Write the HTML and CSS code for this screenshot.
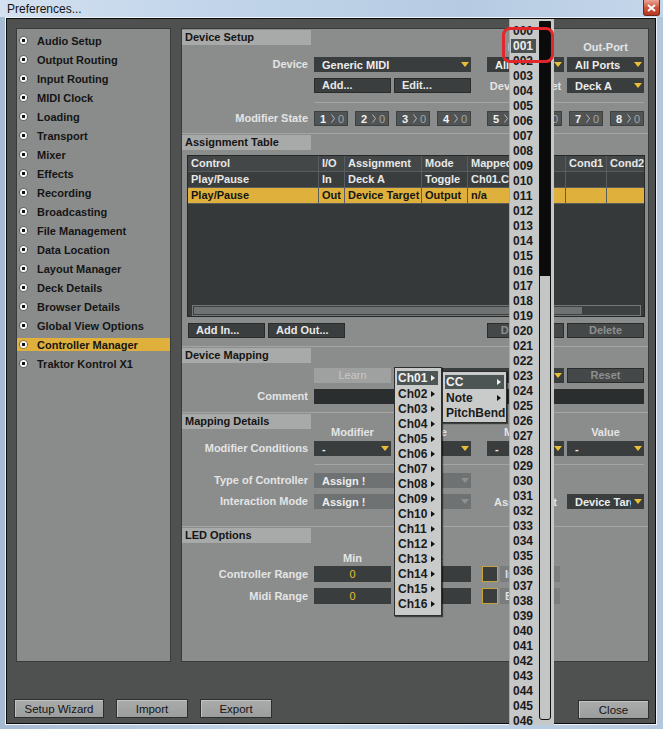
FILE: index.html
```html
<!DOCTYPE html>
<html lang="en">
<head>
  <meta charset="UTF-8">
  <title>Preferences...</title>
  <link rel="stylesheet" href="styles.css">
</head>
<body>
<div class="window">
  <div class="titlebar">
    <span>Preferences...</span>
    <span class="close">
      <svg width="9" height="8" viewBox="0 0 9 8"><path d="M1 1 L8 7 M8 1 L1 7" stroke="#fff" stroke-width="2"/></svg>
    </span>
  </div>

  <div class="frame">
    <div class="inner">
      <div class="panes">
        <ul class="nav">
          <li><i class="dot"></i>Audio Setup</li>
          <li><i class="dot"></i>Output Routing</li>
          <li><i class="dot"></i>Input Routing</li>
          <li><i class="dot"></i>MIDI Clock</li>
          <li><i class="dot"></i>Loading</li>
          <li><i class="dot"></i>Transport</li>
          <li><i class="dot"></i>Mixer</li>
          <li><i class="dot"></i>Effects</li>
          <li><i class="dot"></i>Recording</li>
          <li><i class="dot"></i>Broadcasting</li>
          <li><i class="dot"></i>File Management</li>
          <li><i class="dot"></i>Data Location</li>
          <li><i class="dot"></i>Layout Manager</li>
          <li><i class="dot"></i>Deck Details</li>
          <li><i class="dot"></i>Browser Details</li>
          <li><i class="dot"></i>Global View Options</li>
          <li class="active"><i class="dot"></i>Controller Manager</li>
          <li><i class="dot"></i>Traktor Kontrol X1</li>
        </ul>

        <div class="main">
          <!-- device setup -->
          <div class="section first">
            <div class="row head">
              <div class="tab">Device Setup</div>
              <div class="sub c3">In-Port</div>
              <div class="sub c4">Out-Port</div>
            </div>
            <div class="row mt4">
              <div class="lbl">Device</div>
              <div class="sel c12"><span>Generic MIDI</span><i class="arr"></i></div>
              <div class="sel c3"><span>All Ports</span><i class="arr"></i></div>
              <div class="sel c4"><span>All Ports</span><i class="arr"></i></div>
            </div>
            <div class="row mt6">
              <div class="btn c1">Add...</div>
              <div class="btn c2">Edit...</div>
              <div class="sub c3 mid">Device Target</div>
              <div class="sel c4"><span>Deck A</span><i class="arr"></i></div>
            </div>
            <div class="row line mt9"><div class="c14"></div></div>
            <div class="row mt8">
              <div class="lbl">Modifier State</div>
              <div class="mods c12">
                <div class="mod"><b>1</b><svg width="4" height="9" viewBox="0 0 4 9"><path d="M0.5 0.5 L3.5 4.5 L0.5 8.5" fill="none" stroke="#b9bbbb"/></svg><em>0</em></div>
                <div class="mod"><b>2</b><svg width="4" height="9" viewBox="0 0 4 9"><path d="M0.5 0.5 L3.5 4.5 L0.5 8.5" fill="none" stroke="#b9bbbb"/></svg><em>0</em></div>
                <div class="mod"><b>3</b><svg width="4" height="9" viewBox="0 0 4 9"><path d="M0.5 0.5 L3.5 4.5 L0.5 8.5" fill="none" stroke="#b9bbbb"/></svg><em>0</em></div>
                <div class="mod"><b>4</b><svg width="4" height="9" viewBox="0 0 4 9"><path d="M0.5 0.5 L3.5 4.5 L0.5 8.5" fill="none" stroke="#b9bbbb"/></svg><em>0</em></div>
              </div>
              <div class="mods c34">
                <div class="mod"><b>5</b><svg width="4" height="9" viewBox="0 0 4 9"><path d="M0.5 0.5 L3.5 4.5 L0.5 8.5" fill="none" stroke="#b9bbbb"/></svg><em>0</em></div>
                <div class="mod"><b>6</b><svg width="4" height="9" viewBox="0 0 4 9"><path d="M0.5 0.5 L3.5 4.5 L0.5 8.5" fill="none" stroke="#b9bbbb"/></svg><em>0</em></div>
                <div class="mod"><b>7</b><svg width="4" height="9" viewBox="0 0 4 9"><path d="M0.5 0.5 L3.5 4.5 L0.5 8.5" fill="none" stroke="#b9bbbb"/></svg><em>0</em></div>
                <div class="mod"><b>8</b><svg width="4" height="9" viewBox="0 0 4 9"><path d="M0.5 0.5 L3.5 4.5 L0.5 8.5" fill="none" stroke="#b9bbbb"/></svg><em>0</em></div>
              </div>
            </div>
          </div>

          <!-- assignment table -->
          <div class="section mt7">
            <div class="tab">Assignment Table</div>
            <div class="table">
              <div class="trow hd">
                <div>Control</div><div>I/O</div><div>Assignment</div><div>Mode</div><div>Mapped to</div><div>Cond1</div><div>Cond2</div>
              </div>
              <div class="trow">
                <div>Play/Pause</div><div>In</div><div>Deck A</div><div>Toggle</div><div>Ch01.CC.001</div><div></div><div></div>
              </div>
              <div class="trow on">
                <div>Play/Pause</div><div>Out</div><div>Device Target</div><div>Output</div><div>n/a</div><div></div><div></div>
              </div>
              <div class="hscroll"><div class="thumb"></div></div>
            </div>
            <div class="btnrow">
              <div class="btn">Add In...</div>
              <div class="btn">Add Out...</div>
              <div class="btn dis push">Duplicate</div>
              <div class="btn dis">Delete</div>
            </div>
          </div>

          <!-- device mapping -->
          <div class="section mt8">
            <div class="tab">Device Mapping</div>
            <div class="row mt5">
              <div class="btn learn c1">Learn</div>
              <div class="sel c23"><span>Ch01.CC.001</span><i class="arr"></i></div>
              <div class="btn dis c4">Reset</div>
            </div>
            <div class="row mt6">
              <div class="lbl">Comment</div>
              <div class="field c14"></div>
            </div>
          </div>

          <!-- mapping details -->
          <div class="section mt8">
            <div class="row head tall">
              <div class="tab">Mapping Details</div>
              <div class="sub c1">Modifier</div>
              <div class="sub c2">Value</div>
              <div class="sub c3">Modifier</div>
              <div class="sub c4">Value</div>
            </div>
            <div class="row mt3">
              <div class="lbl">Modifier Conditions</div>
              <div class="sel c1"><span>-</span><i class="arr"></i></div>
              <div class="sel c2"><span>-</span><i class="arr"></i></div>
              <div class="sel c3"><span>-</span><i class="arr"></i></div>
              <div class="sel c4"><span>-</span><i class="arr"></i></div>
            </div>
            <div class="row line mt8"><div class="c14"></div></div>
            <div class="row mt8">
              <div class="lbl">Type of Controller</div>
              <div class="sel dis c12"><span>Assign !</span><i class="arr"></i></div>
            </div>
            <div class="row mt6">
              <div class="lbl">Interaction Mode</div>
              <div class="sel dis c12"><span>Assign !</span><i class="arr"></i></div>
              <div class="sub c3 mid">Assignment</div>
              <div class="sel c4"><span>Device Target</span><i class="arr"></i></div>
            </div>
          </div>

          <!-- led options -->
          <div class="section mt17">
            <div class="tab">LED Options</div>
            <div class="row cap mt9">
              <div class="sub c1">Min</div>
              <div class="sub c2">Max</div>
            </div>
            <div class="row big mt2">
              <div class="lbl">Controller Range</div>
              <div class="field num c1">0</div>
              <div class="field num c2">127</div>
              <div class="opt cx"><span class="chk"></span><span class="optlbl">Invert</span></div>
            </div>
            <div class="row big mt6">
              <div class="lbl">Midi Range</div>
              <div class="field num c1">0</div>
              <div class="field num c2">127</div>
              <div class="opt cx"><span class="chk"></span><span class="optlbl">Blend</span></div>
            </div>
          </div>
        </div>
      </div>

      <div class="footer">
        <div class="wbtn wizard">Setup Wizard</div>
        <div class="wbtn imp">Import</div>
        <div class="wbtn exp">Export</div>
        <div class="wbtn closebtn">Close</div>
      </div>
    </div>
  </div>

  <!-- popup: channel menu -->
  <ul class="chmenu">
    <li class="on">Ch01<i class="tri"></i></li>
    <li>Ch02<i class="tri"></i></li>
    <li>Ch03<i class="tri"></i></li>
    <li>Ch04<i class="tri"></i></li>
    <li>Ch05<i class="tri"></i></li>
    <li>Ch06<i class="tri"></i></li>
    <li>Ch07<i class="tri"></i></li>
    <li>Ch08<i class="tri"></i></li>
    <li>Ch09<i class="tri"></i></li>
    <li>Ch10<i class="tri"></i></li>
    <li>Ch11<i class="tri"></i></li>
    <li>Ch12<i class="tri"></i></li>
    <li>Ch13<i class="tri"></i></li>
    <li>Ch14<i class="tri"></i></li>
    <li>Ch15<i class="tri"></i></li>
    <li>Ch16<i class="tri"></i></li>
  </ul>

  <ul class="submenu">
    <li class="on">CC<i class="tri"></i></li>
    <li>Note<i class="tri"></i></li>
    <li>PitchBend</li>
  </ul>

  <!-- popup: number list -->
  <div class="numlist">
    <ol>
      <li>000</li><li class="on">001</li><li>002</li><li>003</li><li>004</li><li>005</li><li>006</li><li>007</li>
      <li>008</li><li>009</li><li>010</li><li>011</li><li>012</li><li>013</li><li>014</li><li>015</li>
      <li>016</li><li>017</li><li>018</li><li>019</li><li>020</li><li>021</li><li>022</li><li>023</li>
      <li>024</li><li>025</li><li>026</li><li>027</li><li>028</li><li>029</li><li>030</li><li>031</li>
      <li>032</li><li>033</li><li>034</li><li>035</li><li>036</li><li>037</li><li>038</li><li>039</li>
      <li>040</li><li>041</li><li>042</li><li>043</li><li>044</li><li>045</li><li>046</li>
    </ol>
    <div class="vscroll"><div class="vthumb"></div></div>
  </div>

  <div class="mark"></div>
</div>
</body>
</html>
```

FILE: styles.css
```css
* {
  box-sizing: border-box;
}
body {
  margin: 0;
  font-family: "Liberation Sans", Arial, sans-serif;
  background: #b9cce1;
}
.window {
  position: relative;
  width: 663px;
  height: 729px;
  overflow: hidden;
  background: linear-gradient(to right, #a6bbd2, #c6d7ea 45%, #b3c8de);
}
.titlebar {
  height: 17px;
  display: flex;
  align-items: center;
  padding-left: 7px;
  font-size: 12px;
  color: #141414;
  background: linear-gradient(to right, #d3e1f0, #c2d5ea 30%, #b6cbe2 70%, #c4d6ea);
}
.close {
  margin-left: auto;
  margin-right: 3px;
  align-self: flex-start;
  width: 17px;
  height: 16px;
  display: flex;
  align-items: center;
  justify-content: center;
  background: linear-gradient(#eaa592, #d0553c 50%, #b83520);
  border: 1px solid #6e2a1e;
  border-top: none;
  border-radius: 0 0 3px 3px;
}

.frame {
  width: 652px;
  height: 708px;
  margin-left: 5px;
  border: 1px solid #eef3f9;
}
.inner {
  height: 706px;
  border: 1px solid #0c0c0c;
  background: #4f5151;
  padding: 9px 0 0 9px;
}
.panes {
  display: flex;
  gap: 10px;
  height: 634px;
}

/* sidebar */
.nav {
  width: 155px;
  margin: 0;
  padding: 5px 0 0 0;
  list-style: none;
  background: #8a8c8c;
  border: 1px solid #393b3b;
}
.nav li {
  height: 13px;
  margin-bottom: 6px;
  padding-left: 3px;
  display: flex;
  align-items: center;
  font-size: 11px;
  font-weight: bold;
  color: #151515;
  white-space: nowrap;
}
.nav li.active {
  background: #dfb13c;
}
.dot {
  width: 7px;
  height: 7px;
  margin-right: 10px;
  border-radius: 50%;
  background: radial-gradient(circle, #111 0 1.4px, #f6f6f6 2px);
  box-shadow: 0 0 0 0.6px #3c3c3c;
}

/* main panel */
.main {
  width: 468px;
  background: #8b8d8d;
  border: 1px solid #393b3b;
  font-size: 11px;
  font-weight: bold;
  color: #e4e4e4;
}
.section {
  border-top: 1px solid #a4a6a6;
}
.section.first {
  border-top: none;
}
.tab {
  width: 129px;
  height: 15px;
  margin-top: 1px;
  padding-left: 3px;
  line-height: 15px;
  background: #a8aaaa;
  color: #151515;
}
.row {
  display: grid;
  grid-template-columns: 129px 77px 77px 10px 77px 77px;
  column-gap: 3px;
  height: 15px;
}
.row.head {
  height: 23px;
  margin-top: 1px;
}
.row.head.tall {
  height: 24px;
}
.row.head .tab {
  align-self: start;
  margin: 0;
}
.row.head .sub {
  align-self: end;
}
.row.line {
  height: 1px;
}
.row.line div {
  background: #a3a5a5;
}
.row.cap {
  height: 12px;
}
.row.big {
  height: 16px;
}

.mt2 { margin-top: 2px; }
.mt3 { margin-top: 3px; }
.mt4 { margin-top: 4px; }
.mt5 { margin-top: 5px; }
.mt6 { margin-top: 6px; }
.mt7 { margin-top: 7px; }
.mt8 { margin-top: 8px; }
.mt9 { margin-top: 9px; }
.mt17 { margin-top: 17px; }

.c1 { grid-column: 2; }
.c2 { grid-column: 3; }
.c3 { grid-column: 5; }
.c4 { grid-column: 6; }
.c12 { grid-column: 2 / 4; }
.c23 { grid-column: 3 / 6; }
.c34 { grid-column: 5 / 7; }
.c14 { grid-column: 2 / 7; }
.cx { grid-column: 4 / 6; }

.lbl {
  grid-column: 1;
  padding-right: 3px;
  text-align: right;
  line-height: 15px;
  white-space: nowrap;
}
.row.big .lbl {
  line-height: 16px;
}
.sub {
  line-height: 12px;
  text-align: center;
  white-space: nowrap;
}
.sub.mid {
  align-self: center;
}

.sel {
  display: flex;
  align-items: center;
  padding: 0 2px 0 8px;
  background: #3a3d3d;
  color: #ededed;
  overflow: hidden;
}
.sel span {
  flex: 1;
  overflow: hidden;
  white-space: nowrap;
}
.arr {
  width: 0;
  height: 0;
  margin-left: 3px;
  border-left: 4.5px solid transparent;
  border-right: 4.5px solid transparent;
  border-top: 5px solid #e9bf3a;
}
.sel.dis {
  background: #6f7272;
}
.sel.dis .arr {
  border-top-color: #8e9191;
}

.btn {
  height: 15px;
  padding-left: 7px;
  line-height: 13px;
  background: #3b3e3e;
  border: 1px solid #2a2c2c;
  color: #e8e8e8;
  white-space: nowrap;
}
.btn.dis {
  padding: 0;
  text-align: center;
  background: #454848;
  color: #8d9090;
}
.btn.learn {
  padding: 0;
  text-align: center;
  background: #9fa1a1;
  border-color: #9fa1a1;
  color: #c7c9c9;
  font-weight: normal;
}

.mods {
  display: flex;
  gap: 7px;
}
.mod {
  width: 34px;
  display: flex;
  align-items: center;
  background: #515454;
  border: 1px solid #3e4141;
}
.mod b {
  width: 14px;
  padding-left: 5px;
  color: #f2f2f2;
}
.mod svg {
  margin-left: 2px;
}
.mod em {
  margin-left: 3px;
  font-style: normal;
  font-weight: normal;
  color: #a3a5a5;
}

.field {
  background: #2b2e2e;
}
.field.num {
  line-height: 16px;
  text-align: center;
  background: #3a3d3d;
  color: #e8bd3a;
  font-weight: normal;
}
.opt {
  display: flex;
  gap: 2px;
  padding-left: 8px;
}
.chk {
  width: 16px;
  height: 16px;
  border: 1px solid #c9a23a;
  background: #3a3d3d;
}
.optlbl {
  width: 60px;
  padding-left: 5px;
  line-height: 16px;
  background: #7a7d7d;
  color: #dedede;
}

/* assignment table */
.table {
  width: 458px;
  height: 162px;
  margin: 5px 0 0 5px;
  display: flex;
  flex-direction: column;
  background: #363939;
  border: 1px solid #262828;
}
.trow {
  display: grid;
  grid-template-columns: 130px 25px 76px 45px 97px 40px 37px;
  column-gap: 1px;
  height: 16px;
  background: #5a5d5d;
  border-bottom: 1px solid #5a5d5d;
}
.trow div {
  padding-left: 3px;
  line-height: 15px;
  background: #3a3d3d;
  color: #e8e8e8;
  white-space: nowrap;
  overflow: hidden;
}
.trow.hd div {
  background: #444747;
}
.trow.on div {
  background: #dfb13c;
  color: #151515;
}
.hscroll {
  height: 11px;
  margin: auto 3px 0 4px;
  padding: 1px;
  background: #3d4040;
  border: 1px solid #747777;
}
.thumb {
  width: 388px;
  height: 100%;
  background: #6f7272;
}
.btnrow {
  display: flex;
  gap: 3px;
  height: 15px;
  margin-top: 6px;
  padding: 0 4px 0 6px;
}
.btnrow .btn {
  width: 77px;
}
.btnrow .push {
  margin-left: auto;
}

/* footer */
.footer {
  display: flex;
  align-items: flex-start;
  margin-top: 37px;
  margin-left: -2px;
}
.wbtn {
  height: 19px;
  display: flex;
  align-items: center;
  justify-content: center;
  background: linear-gradient(#aaacac, #9c9e9e);
  border: 1px solid #2d2f2f;
  box-shadow: inset 1px 1px 0 #c2c4c4;
  font-size: 11.5px;
  color: #141414;
}
.wizard { width: 90px; }
.imp { width: 72px; margin-left: 12px; }
.exp { width: 72px; margin-left: 12px; }
.closebtn { width: 71px; margin-left: auto; margin-right: 6px; margin-top: 1px; }

/* popups */
.chmenu, .submenu {
  position: absolute;
  margin: 0;
  list-style: none;
  background: #c9caca;
  border: 1px solid #2e2e2e;
  box-shadow: 1px 1px 1px rgba(0, 0, 0, 0.55);
  font-size: 12px;
  font-weight: bold;
  color: #1b1b1b;
}
.chmenu {
  left: 394px;
  top: 367px;
  width: 48px;
  height: 249px;
  padding: 3px 0 0 2px;
}
.submenu {
  left: 442px;
  top: 371px;
  width: 65px;
  height: 52px;
  padding: 3px 0 0 2px;
}
.chmenu li, .submenu li {
  height: 15px;
  display: flex;
  align-items: center;
  justify-content: space-between;
  padding: 0 3px 0 1px;
  white-space: nowrap;
}
.chmenu li {
  width: 41px;
}
.submenu li {
  width: 59px;
}
.chmenu li.on, .submenu li.on {
  height: 14px;
  margin-bottom: 1px;
  background: #4d5454;
  color: #f0f0f0;
}
.tri {
  width: 0;
  height: 0;
  border-top: 3.5px solid transparent;
  border-bottom: 3.5px solid transparent;
  border-left: 4px solid #111;
}
li.on .tri {
  border-left-color: #f0f0f0;
}

.numlist {
  position: absolute;
  left: 509px;
  top: 19px;
  width: 45px;
  height: 706px;
  overflow: hidden;
  background: #c6c7c7;
  border-left: 1px solid #a6a8a8;
}
.numlist ol {
  margin: 0;
  padding: 5px 0 0 1px;
  list-style: none;
}
.numlist li {
  width: 25px;
  height: 15px;
  padding-left: 2px;
  line-height: 15px;
  font-size: 12px;
  font-weight: bold;
  color: #1a1a1a;
}
.numlist li.on {
  height: 14px;
  margin-bottom: 1px;
  background: #4b5050;
  color: #ededed;
}
.vscroll {
  position: absolute;
  left: 29px;
  top: 2px;
  width: 12px;
  height: 699px;
  background: #c4c5c5;
  border: 1px solid #111;
  border-radius: 0 0 3px 3px;
}
.vthumb {
  height: 254px;
  background: #0b0b0b;
}
.mark {
  position: absolute;
  left: 502px;
  top: 27px;
  width: 52px;
  height: 36px;
  border: 3px solid #e2262b;
  border-radius: 8px;
}
```
